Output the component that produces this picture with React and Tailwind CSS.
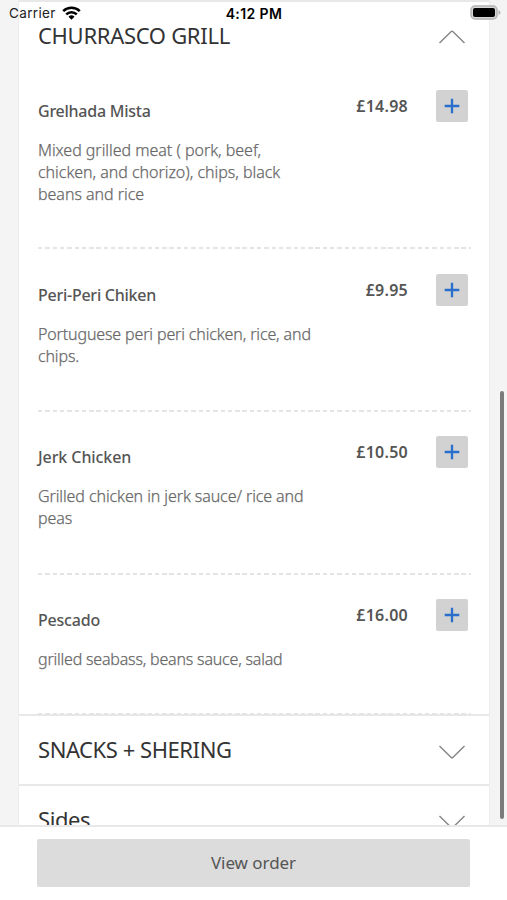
import React from "react";

const dishes = [
  {
    name: "Grelhada Mista",
    lines: ["Mixed grilled meat ( pork, beef,", "chicken, and chorizo), chips, black", "beans and rice"],
    price: "£14.98",
    row: "h-[184px] pt-[25px]",
    nameTracking: "tracking-[-0.25px]",
    tracking: "tracking-[-0.03px]",
  },
  {
    name: "Peri-Peri Chiken",
    lines: ["Portuguese peri peri chicken, rice, and", "chips."],
    price: "£9.95",
    row: "h-[163px] pt-[25px]",
    nameTracking: "tracking-[-0.25px]",
    tracking: "tracking-[-0.14px]",
  },
  {
    name: "Jerk Chicken",
    lines: ["Grilled chicken in jerk sauce/ rice and", "peas"],
    price: "£10.50",
    row: "h-[163px] pt-6",
    nameTracking: "tracking-[-0.08px]",
    tracking: "tracking-[-0.09px]",
  },
  {
    name: "Pescado",
    lines: ["grilled seabass, beans sauce, salad"],
    price: "£16.00",
    row: "h-[140px] pt-6",
    nameTracking: "tracking-[-0.2px]",
    tracking: "tracking-[-0.2px]",
  },
];

function Chevron({ up }) {
  return (
    <svg
      width="28"
      height="16"
      viewBox="0 0 28 16"
      fill="none"
      stroke="#858585"
      strokeWidth="1.4"
      className={up ? "mt-[5px]" : "mt-[5px] rotate-180"}
    >
      <path d="M1.5 14 L13.2 2.5 Q14 1.8 14.8 2.5 L26.5 14" />
    </svg>
  );
}

function StatusBar() {
  return (
    <div className="absolute inset-x-0 top-0 z-10 flex h-7 items-center justify-between pl-[9px] pr-[6px] font-['Inter','Liberation_Sans',sans-serif] text-black">
      <div className="flex w-[148px] items-center gap-[6px]">
        <span className="text-[13.5px] leading-none tracking-[0.35px] text-[#222]">Carrier</span>
        <svg width="19" height="14" viewBox="0 0 19 14" fill="none" stroke="#000" strokeWidth="2.5" className="-mt-0.5">
          <path d="M1.2 5.2 A11.8 11.8 0 0 1 17.8 5.2" />
          <path d="M4.2 8.3 A7.6 7.6 0 0 1 14.8 8.3" />
          <path d="M9.5 13.8 L6.5 10.8 A4.3 4.3 0 0 1 12.5 10.8 Z" fill="#000" stroke="none" />
        </svg>
      </div>
      <span className="text-[14px] font-semibold leading-none tracking-[0.4px]">4:12 PM</span>
      <div className="flex w-[150px] justify-end">
        <svg width="31" height="15" viewBox="0 0 31 15" className="-mt-[3px]">
          <rect x="1" y="1" width="26" height="13" rx="4" fill="#d8d8d8" stroke="#b3b3b3" strokeWidth="1.5" />
          <rect x="3" y="3" width="22" height="9" rx="2" fill="#000" />
          <path d="M28.5 5 Q30.5 6 30.5 7.5 Q30.5 9 28.5 10 Z" fill="#b3b3b3" />
        </svg>
      </div>
    </div>
  );
}

function Dish({ dish }) {
  return (
    <li className={`flex flex-col justify-between ${dish.row}`}>
      <div className="flex items-start">
        <div className="flex-1 pt-[10px]">
          <h3 className={`text-[16px] font-medium leading-[22px] text-[#555] ${dish.nameTracking}`}>{dish.name}</h3>
          <p
            className={`mt-[17px] whitespace-nowrap text-[16px] font-light leading-[22px] text-[#686868] [-webkit-text-stroke:0.25px_#686868] ${dish.tracking}`}
          >
            {dish.lines.map((line) => (
              <span key={line} className="block">
                {line}
              </span>
            ))}
          </p>
        </div>
        <div className="pt-[5px] text-[16px] font-semibold leading-[22px] tracking-[0.25px] text-[#555]">{dish.price}</div>
        <button className="ml-7 mr-[3px] flex size-8 items-center justify-center rounded-[2px] bg-[#d2d2d2]">
          <svg width="16" height="16" viewBox="0 0 16 16" stroke="#2a6fcb" strokeWidth="2.3">
            <path d="M8 0.7V15.3M0.7 8H15.3" />
          </svg>
        </button>
      </div>
      <div className="h-[2px] bg-[repeating-linear-gradient(90deg,#e4e4e4_0_4.4px,transparent_4.4px_7.3px)]" />
    </li>
  );
}

function Section({ title, children, open, head, tracking }) {
  return (
    <section className="border-t-2 border-[#e8e8e8] bg-white">
      <div className={`flex items-center justify-between pl-[19px] pr-[23px] ${head}`}>
        <h2 className={`text-[22px] leading-[30px] text-[#333] ${tracking}`}>{title}</h2>
        <Chevron up={open} />
      </div>
      {children}
    </section>
  );
}

export default function App() {
  return (
    <div className="relative flex h-[900px] w-[507px] flex-col overflow-hidden bg-[#f4f4f4] font-['Noto_Sans','Open_Sans',sans-serif]">
      <StatusBar />
      <main className="relative min-h-0 flex-1 overflow-hidden pl-[18px] pr-[17px]">
        <div className="border-x border-[#ededed]">
          <Section title="CHURRASCO GRILL" open head="h-[63px] pb-0.5 pt-1" tracking="tracking-[-0.3px]">
            {/* last divider sits on top of the next section's border */}
            <ul className="relative -mb-px pl-[19px] pr-[18px]">
              {dishes.map((dish) => (
                <Dish key={dish.name} dish={dish} />
              ))}
            </ul>
          </Section>
          <Section title="SNACKS + SHERING" head="h-[68px] pb-0.5" tracking="tracking-[-0.44px]" />
          <Section title="Sides" head="h-[68px] pb-0.5" tracking="tracking-[-0.4px]" />
        </div>
        <div className="absolute right-[3px] top-[391px] h-[428px] w-1 rounded-full bg-[#7b7b7b]" />
      </main>
      <footer className="h-[75px] border-t-2 border-[#e8e8e8] bg-white px-[37px] pt-3">
        <button className="h-12 w-full rounded-[2px] bg-[#dcdcdc] text-[17px] tracking-[-0.05px] text-[#555]">View order</button>
      </footer>
    </div>
  );
}
